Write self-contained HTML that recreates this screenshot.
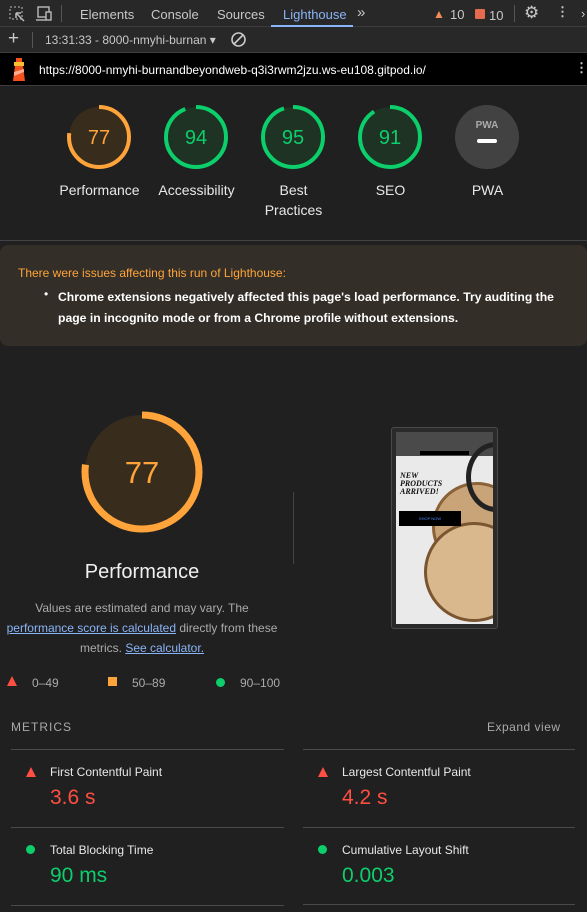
<!DOCTYPE html>
<html><head><meta charset="utf-8"><style>
*{margin:0;padding:0;box-sizing:border-box}
body{width:587px;height:912px;background:#202020;font-family:"Liberation Sans",sans-serif;color:#e3e3e3;position:relative;overflow:hidden}
.abs{position:absolute}
.tb{top:0;left:0;width:587px;height:27px;background:#282828;border-bottom:1px solid #3c3c3c}
.tb2{top:27px;left:0;width:587px;height:26px;background:#282828;border-bottom:1px solid #3c3c3c}
.url{top:53px;left:0;width:587px;height:33px;background:#000;border-bottom:1px solid #3c3c3c}
.t{font-size:13px;color:#c8c8c8}
.g{text-align:center;width:97px;font-size:14px;color:#e8e8e8;line-height:20px}
.warn{top:245px;left:0;width:587px;height:101px;background:#332e27;border-radius:8px}
.m{font-size:12px;color:#e8e8e8}
.mv{font-size:21px}
.ln{height:1px;background:#4a4a4a}
</style></head><body>
<div class="abs tb"></div>
<svg class="abs" style="left:9px;top:6px" width="16" height="16"><rect x="1" y="1" width="12" height="12" fill="none" stroke="#bbb" stroke-dasharray="2 2"/><path d="M7 7l8 8M7 7h5M7 7v5" stroke="#bbb" stroke-width="1.5" fill="none"/></svg>
<svg class="abs" style="left:35px;top:6px" width="18" height="16"><rect x="3" y="1" width="11" height="10" fill="none" stroke="#bbb" stroke-width="1.4"/><rect x="11" y="6" width="5" height="8" fill="#282828" stroke="#bbb" stroke-width="1.4"/><path d="M1 14h10" stroke="#bbb" stroke-width="1.4"/></svg>
<div class="abs" style="left:61px;top:5px;width:1px;height:17px;background:#555"></div>
<div class="abs t" style="left:80px;top:7px">Elements</div>
<div class="abs t" style="left:151px;top:7px">Console</div>
<div class="abs t" style="left:217px;top:7px">Sources</div>
<div class="abs t" style="left:283px;top:7px;color:#8ab4f8">Lighthouse</div>
<div class="abs" style="left:271px;top:25px;width:82px;height:2px;background:#8ab4f8"></div>
<div class="abs t" style="left:357px;top:4px;font-size:15px">»</div>
<div class="abs" style="left:433px;top:7px;color:#f28b54;font-size:12px">▲</div>
<div class="abs t" style="left:450px;top:7px">10</div>
<div class="abs" style="left:475px;top:9px;width:10px;height:10px;background:#e46b4e;border-radius:1px"></div>
<div class="abs t" style="left:489px;top:8px">10</div>
<div class="abs" style="left:514px;top:5px;width:1px;height:17px;background:#555"></div>
<div class="abs t" style="left:524px;top:3px;font-size:17px">⚙</div>
<div class="abs t" style="left:556px;top:4px;font-weight:bold">⋮</div>
<div class="abs t" style="left:581px;top:6px">›</div>
<div class="abs tb2"></div>
<div class="abs t" style="left:8px;top:28px;font-size:19px">+</div>
<div class="abs" style="left:32px;top:32px;width:1px;height:16px;background:#555"></div>
<div class="abs t" style="left:45px;top:33px;font-size:12px">13:31:33 - 8000-nmyhi-burnan ▾</div>
<svg class="abs" style="left:230px;top:31px" width="17" height="17"><circle cx="8.5" cy="8.5" r="6.5" fill="none" stroke="#ccc" stroke-width="1.6"/><path d="M4 13L13 4" stroke="#ccc" stroke-width="1.6"/></svg>
<div class="abs url"></div>
<svg class="abs" style="left:10px;top:57px" width="18" height="25"><rect x="6" y="1" width="6" height="4" fill="#f4511e"/><rect x="4" y="5" width="10" height="4" fill="#fbc02d"/><path d="M5 9h8l2 15H3z" fill="#f4511e"/><path d="M4 15l10-3v3L4 19z" fill="#ffab91"/></svg>
<div class="abs" style="left:39px;top:63px;font-size:12px;color:#fff">https://8000-nmyhi-burnandbeyondweb-q3i3rwm2jzu.ws-eu108.gitpod.io/</div>
<div class="abs t" style="left:575px;top:60px;font-weight:bold">⋮</div>

<svg class="abs" style="left:0;top:100px" width="587" height="80">
<g font-family="Liberation Sans" font-size="20" text-anchor="middle">
<circle cx="99" cy="37" r="30" fill="#382c1c"/><circle cx="99" cy="37" r="30" fill="none" stroke="#ffa43b" stroke-width="4" stroke-dasharray="145.1 200" transform="rotate(-90 99 37)"/><text x="99" y="44" fill="#ffa43b">77</text>
<circle cx="196" cy="37" r="30" fill="#1e3324"/><circle cx="196" cy="37" r="30" fill="none" stroke="#0cce6b" stroke-width="4" stroke-dasharray="177.2 200" transform="rotate(-90 196 37)"/><text x="196" y="44" fill="#0cce6b">94</text>
<circle cx="293" cy="37" r="30" fill="#1e3324"/><circle cx="293" cy="37" r="30" fill="none" stroke="#0cce6b" stroke-width="4" stroke-dasharray="179 200" transform="rotate(-90 293 37)"/><text x="293" y="44" fill="#0cce6b">95</text>
<circle cx="390" cy="37" r="30" fill="#1e3324"/><circle cx="390" cy="37" r="30" fill="none" stroke="#0cce6b" stroke-width="4" stroke-dasharray="171.5 200" transform="rotate(-90 390 37)"/><text x="390" y="44" fill="#0cce6b">91</text>
<circle cx="487" cy="37" r="32" fill="#424242"/><text x="487" y="28" fill="#aaa" font-size="10" font-weight="bold">PWA</text><rect x="477" y="39" width="20" height="4" rx="2" fill="#fff"/>
</g></svg>
<div class="abs g" style="left:51px;top:180px">Performance</div>
<div class="abs g" style="left:148px;top:180px">Accessibility</div>
<div class="abs g" style="left:245px;top:180px">Best<br>Practices</div>
<div class="abs g" style="left:342px;top:180px">SEO</div>
<div class="abs g" style="left:439px;top:180px">PWA</div>
<div class="abs" style="left:0;top:240px;width:587px;height:1px;background:#444"></div>
<div class="abs warn"></div>
<div class="abs" style="left:18px;top:266px;font-size:12px;color:#ffa43b">There were issues affecting this run of Lighthouse:</div>
<div class="abs" style="left:44px;top:287px;font-size:12px;color:#fff">•</div>
<div class="abs" style="left:58px;top:287px;width:520px;font-size:12.2px;color:#fff;font-weight:bold;line-height:21px">Chrome extensions negatively affected this page's load performance. Try auditing the<br>page in incognito mode or from a Chrome profile without extensions.</div>

<svg class="abs" style="left:80px;top:410px" width="124" height="124"><circle cx="62" cy="62" r="57" fill="#382c1c"/><circle cx="62" cy="62" r="57" fill="none" stroke="#ffa43b" stroke-width="7" stroke-dasharray="275.8 400" transform="rotate(-90 62 62)"/><text x="62" y="73" text-anchor="middle" font-family="Liberation Sans" font-size="31" fill="#ffa43b">77</text></svg>
<div class="abs" style="left:0;top:561px;width:284px;text-align:center;font-size:20px;color:#f0f0f0">Performance</div>
<div class="abs" style="left:0;top:598px;width:284px;text-align:center;font-size:12px;color:#aaa;line-height:20px">Values are estimated and may vary. The<br><span style="color:#8ab4f8;text-decoration:underline">performance score is calculated</span> directly from these<br>metrics. <span style="color:#8ab4f8;text-decoration:underline">See calculator.</span></div>
<div class="abs" style="left:293px;top:492px;width:1px;height:72px;background:#444"></div>
<div class="abs" style="left:391px;top:427px;width:107px;height:202px;border:1px solid #4a4a4a;border-radius:3px;background:#2a2a2a"></div>
<div class="abs" style="left:396px;top:432px;width:97px;height:192px;background:#eaeaea;overflow:hidden">
<div style="height:24px;background:#4a4a4a"></div>
<div style="position:absolute;left:24px;top:19px;width:49px;height:4px;background:#000"></div>
<div style="position:absolute;left:36px;top:50px;width:90px;height:90px;border-radius:50%;background:#c9a478;border:3px solid #8a6238"></div>
<div style="position:absolute;left:28px;top:90px;width:100px;height:100px;border-radius:50%;background:#d9b88e;border:3px solid #7a5530"></div>
<div style="position:absolute;left:70px;top:10px;width:60px;height:70px;border-radius:50%;border:5px solid #222"></div>
<div style="position:absolute;left:4px;top:40px;font-size:8px;font-style:italic;font-weight:bold;color:#111;line-height:8px;font-family:'Liberation Serif',serif">NEW<br>PRODUCTS<br>ARRIVED!</div>
<div style="position:absolute;left:3px;top:79px;width:62px;height:15px;background:#000;color:#4a8cff;font-size:4px;text-align:center;line-height:15px">SHOP NOW</div>
</div>

<div class="abs" style="left:7px;top:676px;width:0;height:0;border-left:5px solid transparent;border-right:5px solid transparent;border-bottom:10px solid #ff4e42"></div>
<div class="abs" style="left:32px;top:676px;font-size:12px;color:#aaa">0–49</div>
<div class="abs" style="left:108px;top:677px;width:9px;height:9px;background:#ffa43b"></div>
<div class="abs" style="left:132px;top:676px;font-size:12px;color:#aaa">50–89</div>
<div class="abs" style="left:216px;top:678px;width:9px;height:9px;border-radius:50%;background:#0cce6b"></div>
<div class="abs" style="left:240px;top:676px;font-size:12px;color:#aaa">90–100</div>
<div class="abs" style="left:11px;top:720px;font-size:12px;color:#aaa;letter-spacing:1px">METRICS</div>
<div class="abs" style="left:487px;top:720px;font-size:12px;color:#aaa;letter-spacing:.5px">Expand view</div>
<div class="abs ln" style="left:11px;top:749px;width:273px"></div>
<div class="abs ln" style="left:303px;top:749px;width:272px"></div>
<div class="abs ln" style="left:11px;top:827px;width:273px"></div>
<div class="abs ln" style="left:303px;top:827px;width:272px"></div>
<div class="abs ln" style="left:11px;top:905px;width:273px"></div>
<div class="abs ln" style="left:303px;top:904px;width:272px"></div>
<div class="abs" style="left:26px;top:767px;width:0;height:0;border-left:5px solid transparent;border-right:5px solid transparent;border-bottom:10px solid #ff4e42"></div>
<div class="abs m" style="left:50px;top:765px">First Contentful Paint</div>
<div class="abs mv" style="left:50px;top:786px;color:#ff4e42">3.6 s</div>
<div class="abs" style="left:318px;top:767px;width:0;height:0;border-left:5px solid transparent;border-right:5px solid transparent;border-bottom:10px solid #ff4e42"></div>
<div class="abs m" style="left:342px;top:765px">Largest Contentful Paint</div>
<div class="abs mv" style="left:342px;top:786px;color:#ff4e42">4.2 s</div>
<div class="abs" style="left:26px;top:845px;width:9px;height:9px;border-radius:50%;background:#0cce6b"></div>
<div class="abs m" style="left:50px;top:843px">Total Blocking Time</div>
<div class="abs mv" style="left:50px;top:864px;color:#0cce6b">90 ms</div>
<div class="abs" style="left:318px;top:845px;width:9px;height:9px;border-radius:50%;background:#0cce6b"></div>
<div class="abs m" style="left:342px;top:843px">Cumulative Layout Shift</div>
<div class="abs mv" style="left:342px;top:864px;color:#0cce6b">0.003</div>
</body></html>
